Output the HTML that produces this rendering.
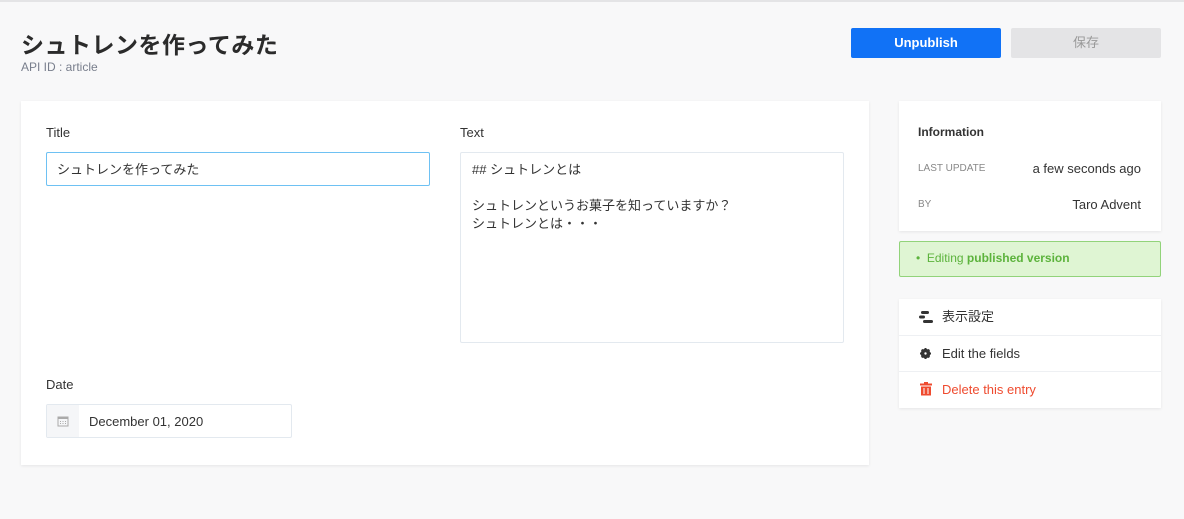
<!DOCTYPE html>
<html><head><meta charset="utf-8"><style>
*{box-sizing:border-box;margin:0;padding:0}
body{width:1184px;height:519px;background:#f8f8f9;font-family:"Liberation Sans","Noto Sans CJK JP",sans-serif;color:#333;position:relative;overflow:hidden}
.abs{position:absolute}
h1{position:absolute;left:21px;top:26px;font-size:23px;font-weight:bold;color:#2b2b2b;letter-spacing:0.5px}
.apiid{left:21px;top:60px;font-size:12px;color:#787e8c}
.btn{top:28px;height:30px;width:150px;font-size:13px;text-align:center;line-height:30px;border-radius:2px}
.card{background:#fff;box-shadow:0 1px 3px rgba(0,0,0,.08)}
.lbl{font-size:13px;color:#333}
.inp{border:1px solid #e3e9ef;border-radius:2px;font-size:13px;color:#333}
.row{position:absolute;left:0;width:262px;height:36px;font-size:13px;border-top:1px solid #eef0f3;line-height:36px;padding-left:43px}
</style></head><body>
<div class="abs" style="left:0;top:0;width:1184px;height:2px;background:#e4e4e6"></div>
<h1>シュトレンを作ってみた</h1>
<div class="abs apiid">API ID : article</div>
<div class="abs btn" style="left:851px;background:#1172f6;color:#fff;font-weight:bold">Unpublish</div>
<div class="abs btn" style="left:1011px;background:#e4e4e6;color:#999">保存</div>

<div class="abs card" style="left:21px;top:101px;width:848px;height:364px">
 <div class="abs lbl" style="left:25px;top:24px">Title</div>
 <div class="abs inp" style="left:25px;top:51px;width:384px;height:34px;border-color:#6ec1f3;padding:6px 10px">シュトレンを作ってみた</div>
 <div class="abs lbl" style="left:439px;top:24px">Text</div>
 <div class="abs inp" style="left:439px;top:51px;width:384px;height:191px;padding:8px 11px;line-height:18px">## シュトレンとは<br><br>シュトレンというお菓子を知っていますか？<br>シュトレンとは・・・</div>
 <div class="abs lbl" style="left:25px;top:276px">Date</div>
 <div class="abs inp" style="left:25px;top:303px;width:246px;height:34px;overflow:hidden">
  <div class="abs" style="left:0;top:0;width:32px;height:32px;background:#f5f6f8"></div>
  <svg class="abs" style="left:10px;top:10px" width="12" height="12" viewBox="0 0 12 12"><rect x="1" y="2" width="10" height="9" fill="none" stroke="#aaa"/><rect x="1" y="2" width="10" height="2" fill="#aaa"/><g fill="#aaa"><rect x="3" y="6" width="1" height="1"/><rect x="5.5" y="6" width="1" height="1"/><rect x="8" y="6" width="1" height="1"/><rect x="3" y="8" width="1" height="1"/><rect x="5.5" y="8" width="1" height="1"/><rect x="8" y="8" width="1" height="1"/></g></svg>
  <div class="abs" style="left:42px;top:9px">December 01, 2020</div>
 </div>
</div>

<div class="abs card" style="left:899px;top:101px;width:262px;height:130px;font-size:13px">
 <div class="abs" style="left:19px;top:24px;font-weight:bold;font-size:12px">Information</div>
 <div class="abs" style="left:19px;top:62px;font-size:10px;color:#888">LAST UPDATE</div>
 <div class="abs" style="right:20px;top:60px">a few seconds ago</div>
 <div class="abs" style="left:19px;top:98px;font-size:10px;color:#888">BY</div>
 <div class="abs" style="right:20px;top:96px">Taro Advent</div>
</div>
<div class="abs" style="left:899px;top:241px;width:262px;height:36px;background:#dff5d3;border:1px solid #92d37a;border-radius:2px;font-size:12px;color:#5cb33c;line-height:33px;padding-left:16px">• &nbsp;Editing <b>published version</b></div>

<div class="abs card" style="left:899px;top:299px;width:262px;height:109px">
 <div class="row" style="top:0;border-top:none">表示設定</div>
 <div class="row" style="top:36px">Edit the fields</div>
 <div class="row" style="top:72px;color:#ef4b2f">Delete this entry</div>
 <svg class="abs" style="left:20px;top:12px" width="14" height="12" viewBox="0 0 14 12"><rect x="2" y="0" width="8" height="3" rx="1.5" fill="#333"/><rect x="0" y="4.5" width="6" height="3" rx="1.5" fill="#333"/><rect x="4" y="9" width="10" height="3" rx="1.5" fill="#333"/></svg>
 <svg class="abs" style="left:21px;top:49px" width="11" height="11" viewBox="0 0 12 12"><circle cx="6" cy="6" r="4" fill="none" stroke="#333" stroke-width="2.5"/><g stroke="#333" stroke-width="2.2"><line x1="6" y1="0" x2="6" y2="12"/><line x1="0" y1="6" x2="12" y2="6"/><line x1="1.8" y1="1.8" x2="10.2" y2="10.2"/><line x1="10.2" y1="1.8" x2="1.8" y2="10.2"/></g><circle cx="6" cy="6" r="1.3" fill="#fff"/></svg>
 <svg class="abs" style="left:21px;top:83px" width="12" height="14" viewBox="0 0 12 14"><rect x="0" y="1.5" width="12" height="2" fill="#ef4b2f"/><rect x="4" y="0" width="4" height="2" fill="#ef4b2f"/><path d="M1 4.5h10v9H1z" fill="#ef4b2f"/><g stroke="#fff"><line x1="4" y1="6" x2="4" y2="12"/><line x1="8" y1="6" x2="8" y2="12"/></g></svg>
</div>
</body></html>
